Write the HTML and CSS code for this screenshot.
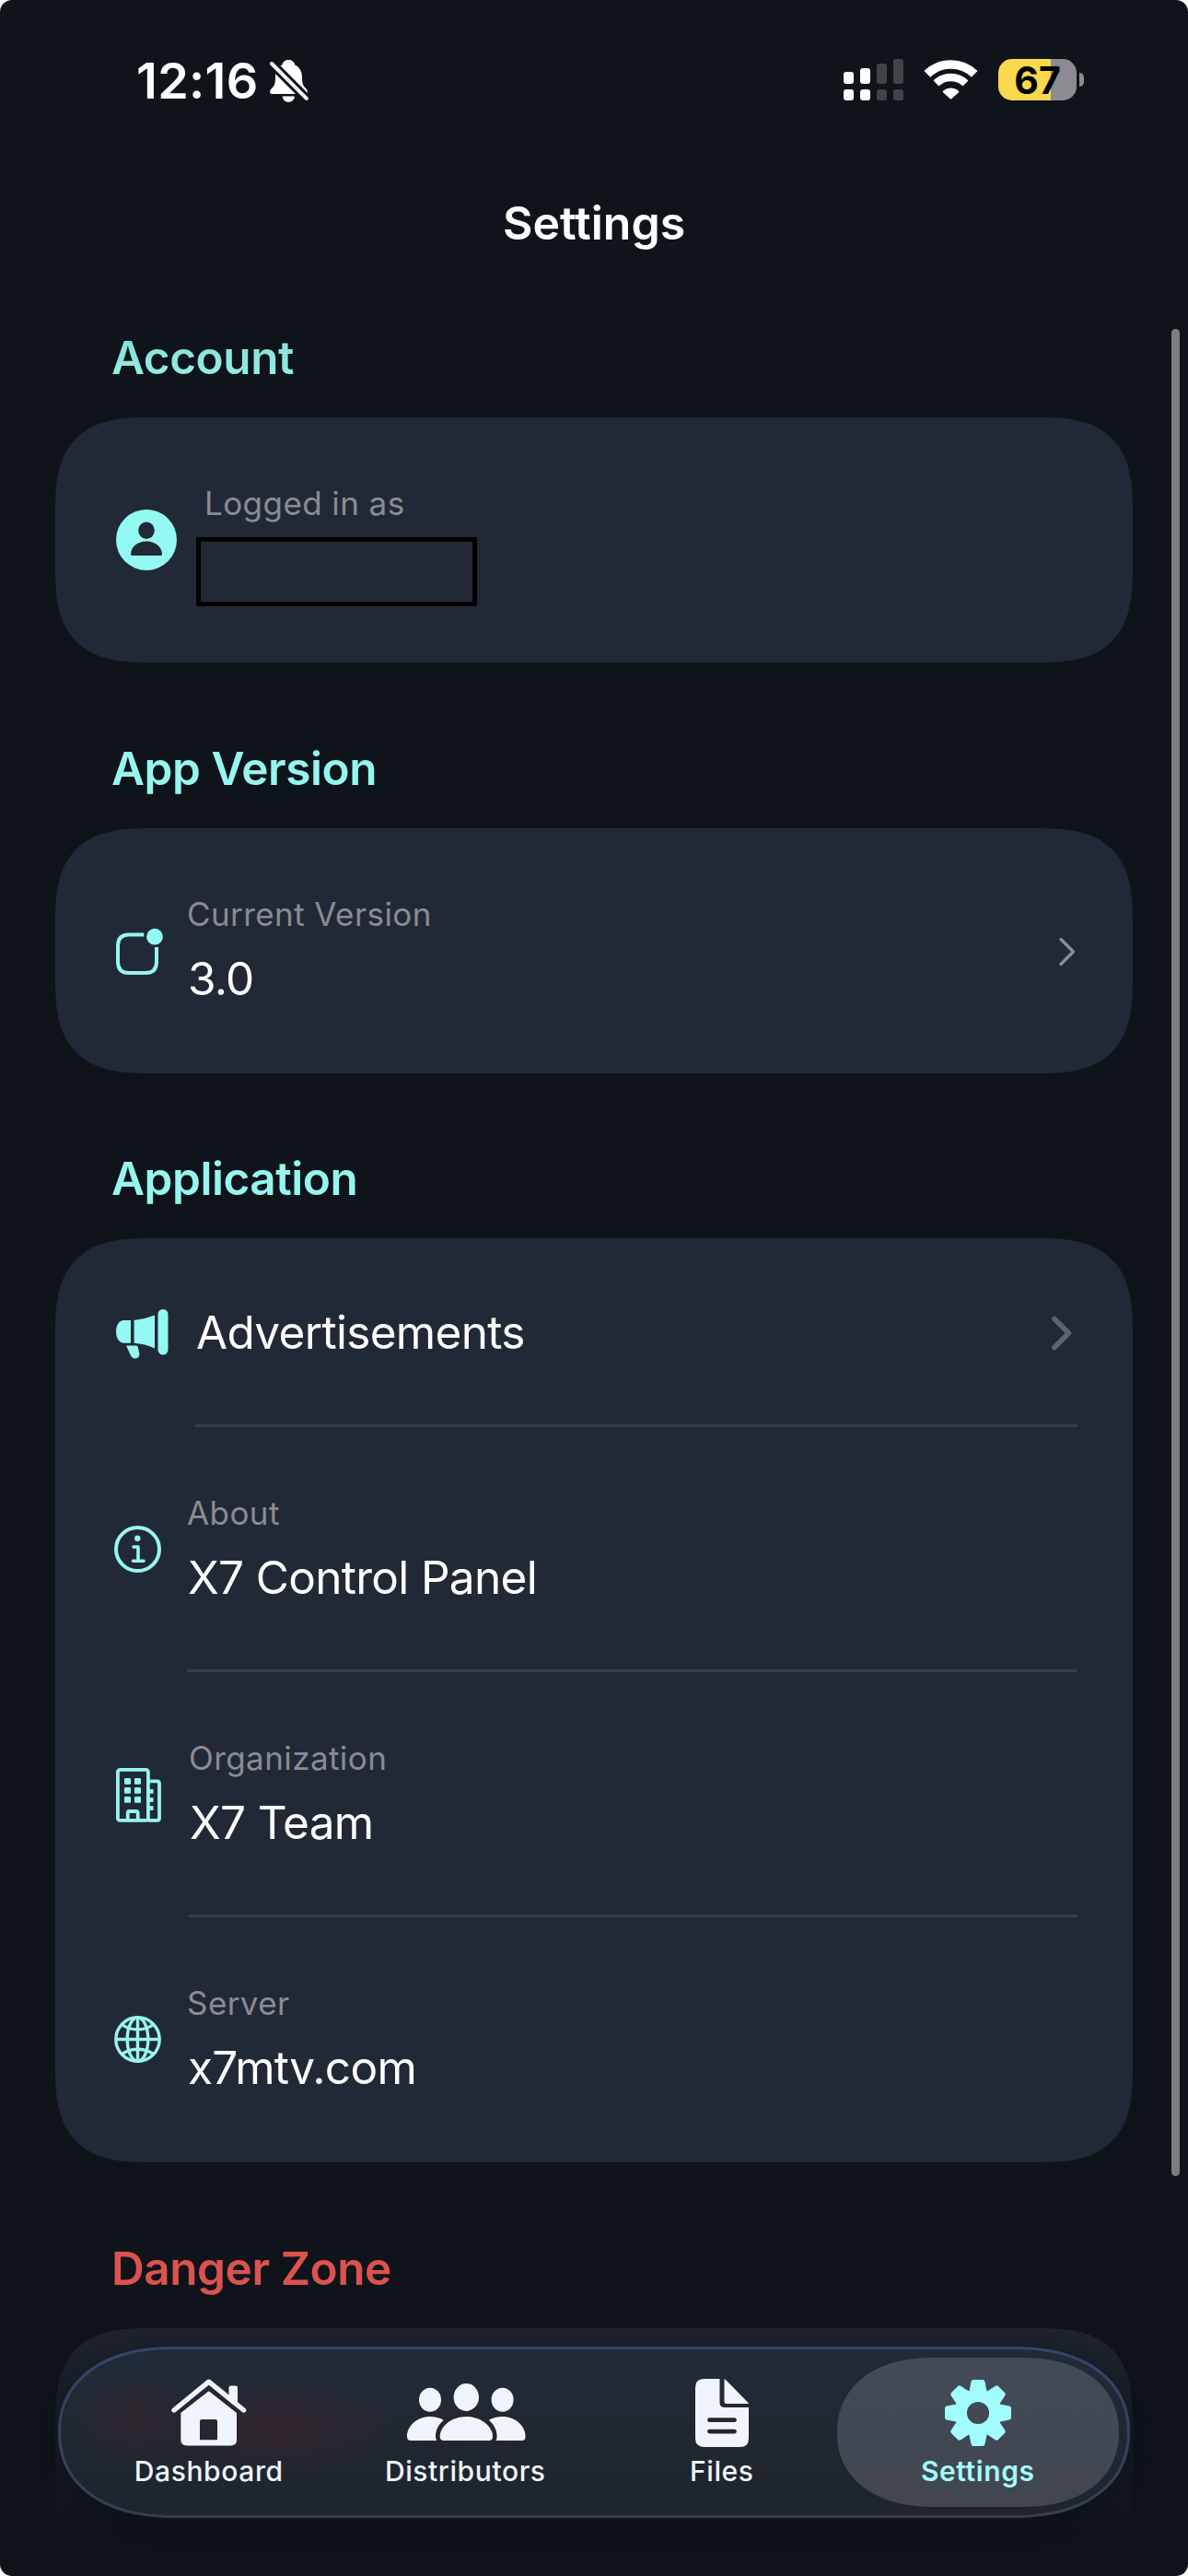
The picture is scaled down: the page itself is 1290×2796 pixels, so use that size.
FILE: index.html
```html
<!DOCTYPE html>
<html lang="en">
<head>
    <meta charset="UTF-8">
    <meta name="viewport" content="width=device-width, initial-scale=1.0">
    <title>Settings</title>
    <link rel="stylesheet" href="styles.css">
</head>
<body>
    <div class="screen">
        <div class="status-bar">
            <span class="time">12:16</span>
            <svg class="bell" width="42" height="46" viewBox="0 0 42 46">
                <path fill="#fff" d="M20.3 0c-4 0-6.500 2.500-7 5.500C8 8 6 13 6 19c0 8-1.500 9.500-4.500 12.500C-1 34.500 0 37 3 37h35c3 0 4-2.500 1.500-5.500C36.500 28 35 27 35 19c0-6-2.500-11-7.700-13.500-.5-3-3-5.500-7-5.500z"/>
                <path fill="#fff" d="M13.700 39.500h13.200c0 3.500-3 6.300-6.600 6.300s-6.600-2.800-6.600-6.300z"/>
                <path stroke="#0f141b" stroke-width="10" d="M-3-1l48 48"/>
                <path stroke="#fff" stroke-width="4" stroke-linecap="round" d="M2 4l37.800 37.800"/>
            </svg>
            <div class="status-right">
                <svg width="65" height="45" viewBox="0 0 65 45">
                    <g fill="#fff">
                        <rect x="0" y="14" width="11" height="13" rx="3"/>
                        <rect x="18" y="10" width="11" height="17" rx="3"/>
                        <rect x="0" y="33" width="11" height="12" rx="3"/>
                        <rect x="18" y="33" width="11" height="12" rx="3"/>
                    </g>
                    <g fill="#414348">
                        <rect x="36" y="5" width="11" height="22" rx="3"/>
                        <rect x="54" y="0" width="11" height="27" rx="3"/>
                        <rect x="36" y="33" width="11" height="12" rx="3"/>
                        <rect x="54" y="33" width="11" height="12" rx="3"/>
                    </g>
                </svg>
                <svg class="wifi" width="57" height="43" viewBox="0 0 57 43">
                    <path fill="none" stroke="#fff" stroke-width="9.600" d="M2.800 15.400a37 37 0 0 1 51.400 0"/>
                    <path fill="none" stroke="#fff" stroke-width="8.600" d="M12.500 25.500a23 23 0 0 1 32 0"/>
                    <path fill="#fff" d="M20.200 33.500a13 13 0 0 1 16.600 0q1 1 0 2l-7.300 6.500q-1 1-2 0l-7.300-6.500q-1-1 0-2z"/>
                </svg>
                <div class="battery"><span>67</span></div>
                <div class="battery-tip"></div>
            </div>
        </div>

        <header class="title">Settings</header>

        <main>
            <section>
                <h2 class="faded">Account</h2>
                <div class="card">
                    <div class="row">
                        <div class="icon icon-user">
                            <svg width="66" height="66" viewBox="0 0 66 66">
                                <circle cx="33" cy="33" r="33" fill="#93f9f2"/>
                                <ellipse cx="33" cy="22.700" rx="8.800" ry="9.200" fill="#222936"/>
                                <path fill="#222936" d="M17.500 50q-1.500 0-1.500-1.500C16 41 23 34.500 33 34.500S50 41 50 48.500q0 1.500-1.500 1.500z"/>
                            </svg>
                        </div>
                        <div class="body">
                            <div class="text">
                                <span class="label">Logged in as</span>
                                <span class="hidden-value"></span>
                            </div>
                        </div>
                    </div>
                </div>
            </section>

            <section>
                <h2>App Version</h2>
                <div class="card">
                    <div class="row">
                        <div class="icon icon-version">
                            <svg width="52" height="52" viewBox="0 0 52 52">
                                <path fill="none" stroke="#96f6ef" stroke-width="4" d="M30.300 6.500H14q-12 0-12 12V36q0 12 12 12h18q12 0 12-12V20"/>
                                <circle cx="42" cy="8.700" r="8.900" fill="#93f9f2"/>
                            </svg>
                        </div>
                        <div class="body">
                            <div class="text">
                                <span class="label">Current Version</span>
                                <span class="value">3.0</span>
                            </div>
                            <svg class="chevron" width="20" height="32" viewBox="0 0 20 32">
                                <path fill="none" stroke="#8c8d94" stroke-width="3.400" stroke-linecap="round" stroke-linejoin="round" d="M2 2.500L15.500 16 2 29.500"/>
                            </svg>
                        </div>
                    </div>
                </div>
            </section>

            <section>
                <h2>Application</h2>
                <div class="card">
                    <div class="row row-single">
                        <div class="icon icon-ads">
                            <svg width="57" height="54" viewBox="0 0 57 54" fill="#93f9f2">
                                <path d="M16 12v24.700H9C3 36.700 0 31 0 24.300S3 12 9 12z"/>
                                <path d="M19.600 12Q31 11 42 6.500v36Q31 37.500 19.600 36.700z"/>
                                <rect x="45.500" y="0" width="11" height="49.500" rx="5.500"/>
                                <path d="M11 39.500h10.500q2 0 2.400 2l1.400 6.500c.6 3-1.500 5.500-4.500 5.500-2.500 0-4-1.200-5-3.500z"/>
                            </svg>
                        </div>
                        <div class="body">
                            <span class="value ads">Advertisements</span>
                            <svg class="chevron chevron-bold" width="24" height="38" viewBox="0 0 24 38">
                                <path fill="none" stroke="#5f636d" stroke-width="5.600" stroke-linecap="round" stroke-linejoin="round" d="M3 3.500L18.500 19 3 34.500"/>
                            </svg>
                        </div>
                    </div>
                    <div class="row">
                        <div class="icon">
                            <svg width="51" height="51" viewBox="0 0 51 51" fill="none" stroke="#96f6ef">
                                <circle cx="25.500" cy="25.500" r="23.500" stroke-width="4"/>
                                <circle cx="25.300" cy="13.800" r="3.200" fill="#96f6ef" stroke="none"/>
                                <path stroke-width="3.600" stroke-linecap="round" stroke-linejoin="round" d="M21 23h5v15M20.500 38.300h11.500"/>
                            </svg>
                        </div>
                        <div class="body">
                            <div class="text">
                                <span class="label">About</span>
                                <span class="value">X7 Control Panel</span>
                            </div>
                        </div>
                    </div>
                    <div class="row">
                        <div class="icon icon-org">
                            <svg width="50" height="59" viewBox="0 0 50 59">
                                <g fill="none" stroke="#96f6ef" stroke-width="3.800">
                                    <rect x="1.900" y="1.900" width="33" height="55" rx="2.500"/>
                                    <path d="M35 14.400h9.500q2.500 0 2.500 2.500v37.500q0 2.500-2.500 2.500H35M12.700 57v-8q0-2 2-2h7q2 0 2 2v8"/>
                                </g>
                                <g fill="#93f9f2">
                                    <rect x="9" y="11" width="7" height="6.800" rx="1"/>
                                    <rect x="20" y="11" width="7" height="6.800" rx="1"/>
                                    <rect x="9" y="21" width="7" height="6.800" rx="1"/>
                                    <rect x="20" y="21" width="7" height="6.800" rx="1"/>
                                    <rect x="9" y="31" width="7" height="6.800" rx="1"/>
                                    <rect x="20" y="31" width="7" height="6.800" rx="1"/>
                                    <rect x="36" y="23" width="4.500" height="4.700"/>
                                    <rect x="36" y="32.200" width="4.500" height="4.700"/>
                                    <rect x="36" y="41.200" width="4.500" height="4.700"/>
                                </g>
                            </svg>
                        </div>
                        <div class="body">
                            <div class="text">
                                <span class="label">Organization</span>
                                <span class="value">X7 Team</span>
                            </div>
                        </div>
                    </div>
                    <div class="row">
                        <div class="icon">
                            <svg width="51" height="51" viewBox="0 0 51 51" fill="none" stroke="#96f6ef" stroke-width="3.400">
                                <circle cx="25.500" cy="25.500" r="23.700"/>
                                <ellipse cx="25.500" cy="25.500" rx="11.300" ry="23.700"/>
                                <path d="M25.500 2v47M2 25.500h47M8.500 9.500Q15.500 14.800 25.500 14.800T42.500 9.500M8.500 41.500Q15.500 36.200 25.500 36.200T42.500 41.500"/>
                            </svg>
                        </div>
                        <div class="body">
                            <div class="text">
                                <span class="label">Server</span>
                                <span class="value">x7mtv.com</span>
                            </div>
                        </div>
                    </div>
                </div>
            </section>

            <section>
                <h2 class="danger">Danger Zone</h2>
                <div class="card card-danger"></div>
            </section>
        </main>

        <div class="scrollbar"></div>

        <nav class="tab-bar">
            <a class="tab">
                <svg width="82" height="74" viewBox="0 0 82 74" fill="#eff4ff">
                    <path d="M62.500 24V9.500q0-2 2-2H70q2 0 2 2v20z"/>
                    <path fill="none" stroke="#eff4ff" stroke-width="5.400" stroke-linecap="round" stroke-linejoin="round" d="M3 34L40.700 3.200 78.600 34"/>
                    <path fill-rule="evenodd" d="M39.700 14q1-1 2 0L71 37v29q0 6.500-6.500 6.500H17q-6.700 0-6.700-6.500V37zM33 44q-2 0-2 2v20.300h19V46q0-2-2-2z"/>
                </svg>
                <span>Dashboard</span>
            </a>
            <a class="tab">
                <svg class="people" width="129" height="74" viewBox="0 -5 129 74" fill="#eff4ff">
                    <ellipse cx="25" cy="17.800" rx="12" ry="13"/>
                    <ellipse cx="64.300" cy="15" rx="13.700" ry="15"/>
                    <ellipse cx="103.600" cy="17.800" rx="12" ry="13"/>
                    <path d="M40 62q-4.300 0-4.300-4.500C35.700 47 48 36 64.300 36S93 47 93 57.500q0 4.500-4.300 4.500z"/>
                    <path d="M4 62q-4 0-4-4.500C0 46 11 36 25 36c5.500 0 10.500 1.300 14.700 3.700C34 44.500 31 51 31 57c0 2 .4 3.600 1.200 5z"/>
                    <path transform="translate(128.600 0) scale(-1 1)" d="M4 62q-4 0-4-4.500C0 46 11 36 25 36c5.500 0 10.500 1.300 14.700 3.700C34 44.500 31 51 31 57c0 2 .4 3.600 1.200 5z"/>
                </svg>
                <span>Distributors</span>
            </a>
            <a class="tab">
                <svg width="58" height="74" viewBox="0 0 58 74" fill="#eff4ff">
                    <path fill-rule="evenodd" d="M9.500 0h17v25.500q0 5.500 5.500 5.500h26v33.500q0 9.500-9.500 9.500h-39Q0 74 0 64.500v-55Q0 0 9.500 0zM15.500 42.300a2.400 2.400 0 0 0 0 4.800h27a2.400 2.400 0 0 0 0-4.800zM15.500 54.700a2.400 2.400 0 0 0 0 4.800h27a2.400 2.400 0 0 0 0-4.800z"/>
                    <path d="M31.500 0Q32.500.500 33.500 1.500L56.500 25q1 1 1.500 2H33.500q-2 0-2-2z"/>
                </svg>
                <span>Files</span>
            </a>
            <a class="tab active">
                <svg width="74" height="74" viewBox="-37 -37 74 74">
                    <defs>
                        <path id="tooth" stroke-linejoin="round" d="M-7.500-21L-5-33.500H5L7.500-21z"/>
                    </defs>
                    <circle r="18.800" fill="none" stroke="#a2fdff" stroke-width="13.400"/>
                    <g fill="#a2fdff" stroke="#a2fdff" stroke-width="5">
                        <use href="#tooth"/>
                        <use href="#tooth" transform="rotate(45)"/>
                        <use href="#tooth" transform="rotate(90)"/>
                        <use href="#tooth" transform="rotate(135)"/>
                        <use href="#tooth" transform="rotate(180)"/>
                        <use href="#tooth" transform="rotate(225)"/>
                        <use href="#tooth" transform="rotate(270)"/>
                        <use href="#tooth" transform="rotate(315)"/>
                    </g>
                </svg>
                <span>Settings</span>
            </a>
        </nav>
    </div>
</body>
</html>
```
FILE: styles.css
```css
* {
    box-sizing: border-box;
}

html {
    background-color: #ffffff;
}

body {
    margin: 0;
    font-family: Inter, "Liberation Sans", sans-serif;
    color: #ffffff;
}

svg {
    display: block;
    flex: none;
    overflow: visible;
}

.bell {
    overflow: hidden;
}

.screen {
    position: relative;
    width: 1290px;
    height: 2796px;
    overflow: hidden;
    background-color: #0f141b;
    border-radius: 13px;
}

/* status bar */
.status-bar {
    display: flex;
    align-items: center;
    height: 175px;
    padding: 0 113px 0 148px;
}

.time {
    width: 145px;
    font-size: 54px;
    font-weight: 600;
    letter-spacing: 0.3px;
    white-space: nowrap;
}

.status-right {
    display: flex;
    align-items: center;
    margin: -2px 0 0 auto;
}

.wifi {
    margin: 0 23px;
}

.battery {
    width: 85px;
    height: 45px;
    border-radius: 15px;
    background: linear-gradient(90deg, #f8d84c 57px, #8b8b91 57px);
    color: #000000;
    font-size: 41px;
    font-weight: 700;
    line-height: 46px;
    text-align: center;
}

.battery-tip {
    width: 5px;
    height: 15px;
    margin-left: 3px;
    border-radius: 0 5px 5px 0;
    background-color: #8b8b91;
}

.title {
    height: 133px;
    font-size: 50px;
    font-weight: 600;
    line-height: 134px;
    text-align: center;
}

/* content */
main {
    display: flex;
    flex-direction: column;
    gap: 84.5px;
    padding: 50px 60px 0;
}

h2 {
    margin: 0 0 35px 61px;
    font-size: 49.5px;
    font-weight: 600;
    line-height: 60px;
    letter-spacing: -0.45px;
    color: #96f6ef;
}

.faded {
    background: linear-gradient(#84dcd4, #98f0e9);
    -webkit-background-clip: text;
    background-clip: text;
    color: transparent;
}

.danger {
    color: #dc524e;
}

.card {
    padding: 0 60px;
    border-radius: 78px;
    background-color: #222936;
}

.card-danger {
    height: 266px;
    background: linear-gradient(#1e242e, #171c25 50%, #0f141b 85%);
}

@supports (corner-shape: squircle) {
    .card {
        border-radius: 105px;
        corner-shape: superellipse(1.5);
    }
}

.row {
    display: flex;
    align-items: center;
    height: 266px;
}

.row-single {
    height: 205px;
}

.icon {
    flex: 0 0 83px;
    padding: 0 0 2px 4px;
}

.icon-user {
    flex-basis: 102px;
    padding: 0 0 0 6px;
}

.icon-version {
    padding: 5px 0 0 6px;
}

.icon-ads {
    flex-basis: 92px;
    padding: 2px 0 0 6px;
}

.icon-org {
    flex-basis: 85px;
    padding: 1px 0 0 6px;
}

.body {
    display: flex;
    flex: 1;
    align-items: center;
    justify-content: space-between;
    height: 100%;
    border-bottom: 3px solid #373d47;
}

.row:last-child .body {
    border-bottom-color: transparent;
}

.text {
    display: flex;
    flex-direction: column;
    align-self: flex-start;
    padding-top: 70px;
}

.label {
    font-size: 35px;
    line-height: 46px;
    letter-spacing: 0.42px;
    color: #8b8b92;
}

.value {
    margin: 17px 0 0 1px;
    font-size: 49.5px;
    line-height: 60px;
    letter-spacing: -0.68px;
}

.ads {
    margin-top: 1px;
}

.hidden-value {
    width: 305px;
    height: 75px;
    margin: 14px 0 0 -9px;
    border: 5px solid #000000;
}

.chevron {
    margin-top: 5px;
}

.chevron-bold {
    margin: 3px 4px 0 0;
}

.scrollbar {
    position: absolute;
    top: 357px;
    right: 9px;
    width: 9px;
    height: 2005px;
    border-radius: 5px;
    background-color: #7b7e81;
}

/* tab bar */
.tab-bar {
    position: absolute;
    left: 63px;
    bottom: 63px;
    display: grid;
    grid-template-columns: repeat(4, 278.5px);
    justify-content: center;
    width: 1164px;
    height: 186px;
    padding: 9px 0;
    border: 3px solid transparent;
    border-radius: 93px;
    background:
        radial-gradient(ellipse 60px 55px at 82px 75px, rgba(110, 25, 30, 0.17), transparent) padding-box,
        radial-gradient(ellipse 125px 50px at 235px 86px, rgba(110, 25, 30, 0.22), transparent) padding-box,
        linear-gradient(#212b39, #222832 40%, #1e242e) padding-box,
        linear-gradient(#34456a, #35435a 50%, #343e4b) border-box;
    box-shadow: 0 10px 40px rgba(8, 12, 16, 0.5);
}

.tab {
    display: flex;
    flex-direction: column;
    align-items: center;
    margin: 0 -13px 0 -14px;
    padding-top: 23px;
    border-radius: 81px;
    font-size: 30px;
    font-weight: 500;
    line-height: 36px;
    letter-spacing: 0.6px;
    color: #eff4ff;
}

.people {
    margin-left: 2px;
}

.tab span {
    margin-top: 8px;
}

.active {
    margin: 0 -13px 0 -15px;
    font-weight: 600;
    color: #a2fdff;
    background: linear-gradient(#434a58, #41464f);
}

@supports (corner-shape: squircle) {
    .tab-bar {
        border-radius: 125px / 93px;
        corner-shape: superellipse(1.15);
    }

    .tab {
        border-radius: 105px / 81px;
        corner-shape: superellipse(1.15);
    }
}
```
